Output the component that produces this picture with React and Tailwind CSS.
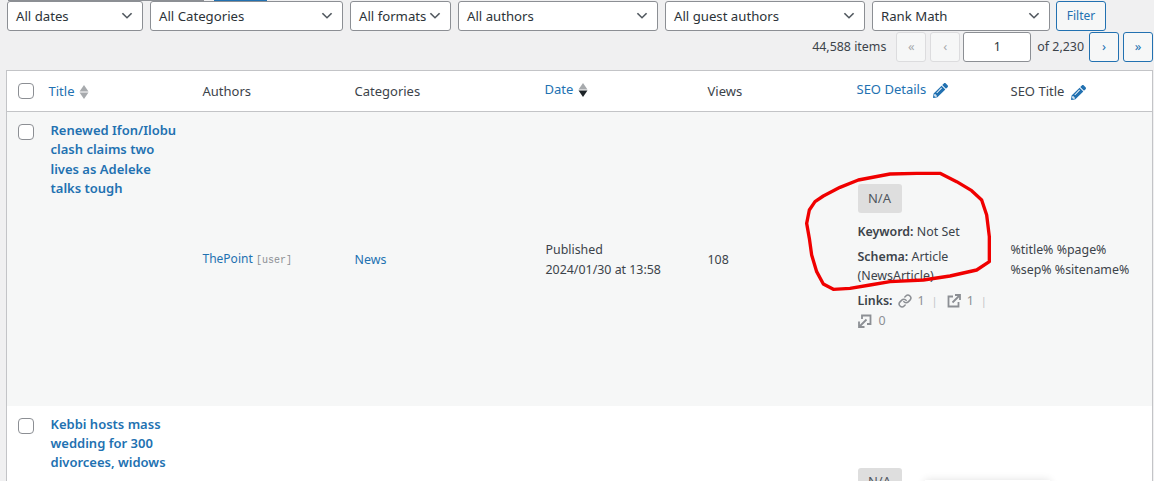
import React from "react"
import { FaPencilAlt } from "react-icons/fa"
import { Link as LinkIcon } from "lucide-react"

const Chevron = () => (
  <svg viewBox="0 0 20 20" className="w-4 h-4 shrink-0 fill-[#50575e]">
    <path d="M5 6l5 5 5-5 1.5 1.2L10 13.5 3.5 7.2 5 6z" />
  </svg>
)

const Select = ({ label, className }) => (
  <div className={`h-[30px] bg-white border border-[#8c8f94] rounded-[3px] flex items-center justify-between pl-2 pr-[7px] text-[13.2px] text-[#2c3338] ${className}`}>
    <span className="pt-[2px]">{label}</span>
    <Chevron />
  </div>
)

const PageBtn = ({ label, off }) => (
  <div className={`w-[30px] h-[30px] rounded-[3px] border flex items-center justify-center text-[13px] ${off ? "border-[#dcdcde] bg-[#f6f7f7] text-[#a7aaad]" : "border-[#2271b1] bg-[#f6f7f7] text-[#2271b1]"}`}>
    {label}
  </div>
)

const Sort = ({ dark }) => (
  <svg viewBox="0 0 10 16" className="w-[10px] h-[16px] ml-[5px]">
    <path d="M5 1l4.5 6.5h-9z" fill="#a7aaad" />
    <path d="M5 15l4.5-6.5h-9z" fill={dark ? "#1d2327" : "#a7aaad"} />
  </svg>
)

const Checkbox = () => <div className="w-4 h-4 bg-white border border-[#8c8f94] rounded-[4px]" />

const External = () => (
  <svg viewBox="0 0 14 14" className="w-[14px] h-[14px] shrink-0 fill-none stroke-[#8c8f94] stroke-[1.8]">
    <path d="M6 2.5H1.5v10h10V8" />
    <path d="M5.5 8.5L12.5 1.5M8 1h5v5" />
  </svg>
)

const Internal = () => (
  <svg viewBox="0 0 14 14" className="w-[14px] h-[14px] shrink-0 fill-none stroke-[#8c8f94] stroke-[1.8]">
    <path d="M4 5V1.5h8.5V10H9" />
    <path d="M8.5 5.5L1.5 12.5M1 7.5V13h5.5" />
  </svg>
)

const Sep = () => <span className="text-[#c3c4c7] text-[11px] ml-[7px] mr-[9px]">|</span>

const Badge = () => (
  <div className="w-[44px] h-[29px] rounded-[3px] bg-[#dedede] flex items-center justify-center text-[13px] text-[#50575e]">N/A</div>
)

export default function App() {
  return (
    <div className="relative w-[1154px] h-[481px] overflow-hidden bg-[#f0f0f1] font-['Noto_Sans',sans-serif] text-[12.4px] text-[#3c434a]">
      <div className="flex h-px pl-2">
        <div className="w-[196px] bg-[#8c8f94]" />
        <div className="w-[53px] ml-[10px] bg-[#2271b1]" />
      </div>

      <div className="flex gap-[7px] pl-[7px]">
        <Select label="All dates" className="w-[136px]" />
        <Select label="All Categories" className="w-[193px]" />
        <Select label="All formats" className="w-[101px]" />
        <Select label="All authors" className="w-[200px]" />
        <Select label="All guest authors" className="w-[200px]" />
        <Select label="Rank Math" className="w-[178px]" />
        <div className="w-[50px] h-[30px] -ml-px border border-[#2271b1] rounded-[3px] bg-[#f6f7f7] text-[#2271b1] text-xs flex items-center justify-center">Filter</div>
      </div>

      <div className="flex items-center justify-end h-[30px] mt-px pr-px">
        <span className="mr-[10px]">44,588 items</span>
        <PageBtn label="«" off />
        <div className="w-[4px]" />
        <PageBtn label="‹" off />
        <div className="w-[3px]" />
        <div className="w-[68px] h-[30px] bg-white border border-[#8c8f94] rounded-[3px] flex items-center justify-center text-[#2c3338]">1</div>
        <span className="ml-[6px] mr-[5px]">of 2,230</span>
        <PageBtn label="›" />
        <div className="w-[4px]" />
        <PageBtn label="»" />
      </div>

      <table className="table-fixed w-[1147px] ml-[6px] mt-[8px] border border-[#c3c4c7] border-collapse bg-white text-[12.4px]">
        <colgroup>
          <col className="w-[34px]" />
          <col className="w-[152px]" />
          <col className="w-[152px]" />
          <col className="w-[190px]" />
          <col className="w-[162px]" />
          <col className="w-[149px]" />
          <col className="w-[154px]" />
          <col />
        </colgroup>
        <thead>
          <tr className="h-[41px] border-b border-[#c3c4c7] text-left text-[13px]">
            <th className="pl-[11px] font-normal"><Checkbox /></th>
            <th className="pl-[8px] pt-[2px] font-normal">
              <span className="flex items-center text-[#2271b1]">Title<Sort /></span>
            </th>
            <th className="pl-[10px] pt-[2px] font-normal">Authors</th>
            <th className="pl-[10px] pt-[2px] font-normal">Categories</th>
            <th className="pl-[10px] pb-[2px] font-normal">
              <span className="flex items-center text-[#2271b1]">Date<Sort dark /></span>
            </th>
            <th className="pl-[11px] pt-[2px] font-normal">Views</th>
            <th className="pl-[11px] pb-[2px] font-normal">
              <span className="flex items-center gap-[7px] text-[#2271b1]">SEO Details<FaPencilAlt className="w-[15px] h-[15px]" /></span>
            </th>
            <th className="pl-[11px] pt-[2px] font-normal">
              <span className="flex items-center gap-[7px]">SEO Title<FaPencilAlt className="w-[15px] h-[15px] text-[#2271b1]" /></span>
            </th>
          </tr>
        </thead>
        <tbody>
          <tr className="h-[294px] bg-[#f6f7f7]">
            <td className="align-top pt-[12px] pl-[11px]"><Checkbox /></td>
            <td className="align-top pt-[9px] pl-[10px] pr-[10px] text-[13px] text-[#2271b1] font-semibold leading-[19.4px]">
              Renewed Ifon/Ilobu clash claims two lives as Adeleke talks tough
            </td>
            <td className="pl-[10px] pt-[2px] text-[#2271b1]">
              <span className="text-[12px]">ThePoint</span> <span className="font-['Liberation_Mono',monospace] text-[10px] text-[#8c8f94]">[user]</span>
            </td>
            <td className="pl-[10px] pt-[3px] text-[#2271b1]">News</td>
            <td className="pl-[11px] pt-[2px] leading-[19.5px]">Published<br />2024/01/30 at 13:58</td>
            <td className="pl-[11px] pt-[3px]">108</td>
            <td className="pl-[12px] pb-[2px]">
              <Badge />
              <p className="mt-[9px] leading-[19px]"><b className="font-semibold">Keyword:</b> Not Set</p>
              <p className="mt-[6px] leading-[19px]"><b className="font-semibold">Schema:</b> Article (NewsArticle)</p>
              <div className="mt-[6px] h-[20px] flex items-center">
                <b className="font-semibold mr-[5px]">Links:</b>
                <LinkIcon className="w-[14px] h-[14px] shrink-0 text-[#8c8f94] mr-[6px]" strokeWidth={2.6} />
                <span className="text-[#8c8f94]">1</span><Sep />
                <External />
                <span className="text-[#8c8f94] ml-[6px]">1</span><Sep />
              </div>
              <div className="h-[20px] flex items-center">
                <Internal />
                <span className="text-[#8c8f94] ml-[7px]">0</span>
              </div>
            </td>
            <td className="pl-[11px] pt-[2px] leading-[19.5px]">%title% %page%<br />%sep% %sitename%</td>
          </tr>
          <tr className="h-[100px] bg-white">
            <td className="align-top pt-[12px] pl-[11px]"><Checkbox /></td>
            <td className="align-top pt-[9px] pl-[10px] pr-[10px] text-[13px] text-[#2271b1] font-semibold leading-[19.4px]">
              Kebbi hosts mass wedding for 300 divorcees, widows
            </td>
            <td /><td /><td /><td />
            <td className="align-top pt-[62px] pl-[12px]">
              <Badge />
            </td>
            <td />
          </tr>
        </tbody>
      </table>

      {/* faint edge of a popup at the bottom of the page */}
      <div className="absolute left-[925px] top-[480px] w-[125px] h-[20px] bg-white shadow-[0_0_8px_rgba(0,0,0,0.12)]" />

      <svg viewBox="0 0 1092 540" className="absolute left-[790px] top-[160px] w-[364px] h-[180px] fill-none stroke-[#f00000] stroke-[10]" strokeLinejoin="round">
        <path d="M58 150L75 125 100 108 150 82 205 60 300 42 380 40 450 40 500 65 545 92 575 120 590 165 598 230 598 305 560 330 480 348 400 360 300 365 240 375 180 385 130 388 100 372 80 335 65 285 58 235 50 190Z" />
      </svg>
    </div>
  )
}
